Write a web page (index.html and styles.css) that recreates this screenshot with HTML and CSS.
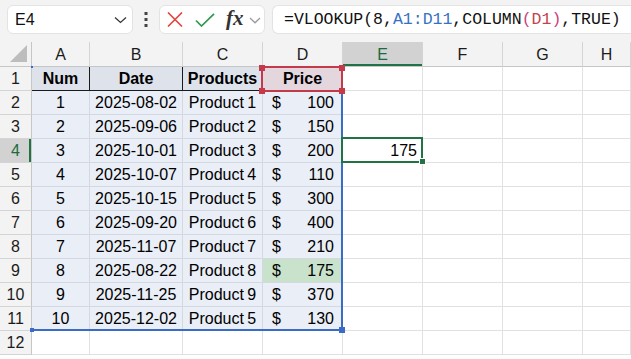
FILE: index.html
```html
<!DOCTYPE html>
<html>
<head>
<meta charset="utf-8">
<link rel="stylesheet" href="styles.css">
</head>
<body>
<div class="toolbar">
  <div class="namebox">
    <span class="nb-text">E4</span>
    <svg class="nb-chev" width="13" height="8" viewBox="0 0 13 8"><path d="M1 1.5 L6.5 6.5 L12 1.5" fill="none" stroke="#333" stroke-width="1.2"/></svg>
  </div>
  <div class="dots">
    <svg width="4" height="15" viewBox="0 0 4 15"><rect x="0.5" y="0" width="3" height="3" fill="#444"/><rect x="0.5" y="6" width="3" height="3" fill="#444"/><rect x="0.5" y="12" width="3" height="3" fill="#444"/></svg>
  </div>
  <div class="fxbox">
    <svg class="ic-x" width="16" height="15" viewBox="0 0 16 15"><path d="M1 0.5 L15 14.5 M15 0.5 L1 14.5" stroke="#e5423d" stroke-width="1.6" fill="none"/></svg>
    <svg class="ic-check" width="20" height="14" viewBox="0 0 20 14"><path d="M1 7.5 L6.5 13 L19 0.8" stroke="#2f9a4d" stroke-width="1.7" fill="none"/></svg>
    <span class="fx">fx</span>
    <svg class="ic-chev" width="12" height="7" viewBox="0 0 12 7"><path d="M1 1 L6 5.8 L11 1" fill="none" stroke="#9a9a9a" stroke-width="1.3"/></svg>
  </div>
  <div class="formula">=VLOOKUP(8,<span class="rb">A1:D11</span>,COLUMN<span class="rp">(</span><span class="rr">D1</span><span class="rp">)</span>,TRUE)</div>
</div>

<div class="sheet">
  <div class="grid">
    <div class="c corner"><svg width="18" height="18" viewBox="0 0 18 18"><polygon points="17,0 17,17 0,17" fill="#bdbdbd"/></svg></div>
    <div class="c colh">A</div>
    <div class="c colh">B</div>
    <div class="c colh">C</div>
    <div class="c colh">D</div>
    <div class="c colh sel">E</div>
    <div class="c colh">F</div>
    <div class="c colh">G</div>
    <div class="c colh">H</div>

    <div class="c rowh">1</div>
    <div class="c t th ctr">Num</div>
    <div class="c t th ctr">Date</div>
    <div class="c t th ctr">Products</div>
    <div class="c t th ctr pink">Price</div>
    <div class="c"></div><div class="c"></div><div class="c"></div><div class="c"></div>

    <div class="c rowh">2</div>
    <div class="c t ctr">1</div><div class="c t ctr">2025-08-02</div><div class="c t ctr prod">Product 1</div>
    <div class="c t money"><span>$</span><span>100</span></div>
    <div class="c"></div><div class="c"></div><div class="c"></div><div class="c"></div>

    <div class="c rowh">3</div>
    <div class="c t ctr">2</div><div class="c t ctr">2025-09-06</div><div class="c t ctr prod">Product 2</div>
    <div class="c t money"><span>$</span><span>150</span></div>
    <div class="c"></div><div class="c"></div><div class="c"></div><div class="c"></div>

    <div class="c rowh sel">4</div>
    <div class="c t ctr">3</div><div class="c t ctr">2025-10-01</div><div class="c t ctr prod">Product 3</div>
    <div class="c t money"><span>$</span><span>200</span></div>
    <div class="c right">175</div><div class="c"></div><div class="c"></div><div class="c"></div>

    <div class="c rowh">5</div>
    <div class="c t ctr">4</div><div class="c t ctr">2025-10-07</div><div class="c t ctr prod">Product 4</div>
    <div class="c t money"><span>$</span><span>110</span></div>
    <div class="c"></div><div class="c"></div><div class="c"></div><div class="c"></div>

    <div class="c rowh">6</div>
    <div class="c t ctr">5</div><div class="c t ctr">2025-10-15</div><div class="c t ctr prod">Product 5</div>
    <div class="c t money"><span>$</span><span>300</span></div>
    <div class="c"></div><div class="c"></div><div class="c"></div><div class="c"></div>

    <div class="c rowh">7</div>
    <div class="c t ctr">6</div><div class="c t ctr">2025-09-20</div><div class="c t ctr prod">Product 6</div>
    <div class="c t money"><span>$</span><span>400</span></div>
    <div class="c"></div><div class="c"></div><div class="c"></div><div class="c"></div>

    <div class="c rowh">8</div>
    <div class="c t ctr">7</div><div class="c t ctr">2025-11-07</div><div class="c t ctr prod">Product 7</div>
    <div class="c t money"><span>$</span><span>210</span></div>
    <div class="c"></div><div class="c"></div><div class="c"></div><div class="c"></div>

    <div class="c rowh">9</div>
    <div class="c t ctr">8</div><div class="c t ctr">2025-08-22</div><div class="c t ctr prod">Product 8</div>
    <div class="c t money hit"><span>$</span><span>175</span></div>
    <div class="c"></div><div class="c"></div><div class="c"></div><div class="c"></div>

    <div class="c rowh">10</div>
    <div class="c t ctr">9</div><div class="c t ctr">2025-11-25</div><div class="c t ctr prod">Product 9</div>
    <div class="c t money"><span>$</span><span>370</span></div>
    <div class="c"></div><div class="c"></div><div class="c"></div><div class="c"></div>

    <div class="c rowh">11</div>
    <div class="c t ctr">10</div><div class="c t ctr">2025-12-02</div><div class="c t ctr prod">Product 5</div>
    <div class="c t money"><span>$</span><span>130</span></div>
    <div class="c"></div><div class="c"></div><div class="c"></div><div class="c"></div>

    <div class="c rowh">12</div>
    <div class="c"></div><div class="c"></div><div class="c"></div><div class="c"></div>
    <div class="c"></div><div class="c"></div><div class="c"></div><div class="c"></div>
  </div>

  <div class="range-blue"></div>
  <div class="hdl blue-br"></div>
  <div class="hdl blue-bl"></div>
  <div class="hdl blue-tl"></div>
  <div class="range-red"></div>
  <div class="hdl red-tl"></div>
  <div class="hdl red-tr"></div>
  <div class="hdl red-bl"></div>
  <div class="hdl red-br"></div>
  <div class="active"></div>
  <div class="hdl act-h"></div>
</div>
</body>
</html>
```

FILE: styles.css
```css
html, body {
  margin: 0;
  padding: 0;
}
body {
  width: 631px;
  height: 359px;
  overflow: hidden;
  background: #ffffff;
  font-family: "Liberation Sans", Arial, sans-serif;
  color: #000;
}

/* ---------- toolbar ---------- */
.toolbar {
  height: 42px;
  background: #f3f3f3;
  display: flex;
  align-items: flex-start;
  padding-top: 5px;
  box-sizing: border-box;
}
.namebox {
  margin-left: 7px;
  width: 126px;
  height: 29px;
  background: #fff;
  border: 1px solid #e3e3e3;
  border-radius: 6px;
  box-sizing: border-box;
  display: flex;
  align-items: center;
  justify-content: space-between;
  padding: 0 5px 0 7px;
}
.nb-text {
  font-size: 16px;
  color: #111;
}
.dots {
  width: 26px;
  height: 29px;
  display: flex;
  align-items: center;
  justify-content: center;
}
.fxbox {
  width: 106px;
  height: 29px;
  background: #fff;
  border: 1px solid #e3e3e3;
  border-radius: 6px;
  box-sizing: border-box;
  display: flex;
  align-items: center;
  padding-left: 7px;
}
.ic-x { margin-right: 12px; }
.ic-check { margin-right: 11px; }
.fx {
  font-family: "Liberation Serif", "DejaVu Serif", serif;
  font-style: italic;
  font-weight: bold;
  font-size: 21px;
  color: #333;
  line-height: 1;
  margin-top: -3px;
  margin-right: 5px;
}
.ic-chev { margin-top: 2px; }
.formula {
  margin-left: 7px;
  flex: 1;
  height: 29px;
  background: #fff;
  border: 1px solid #e3e3e3;
  border-right: none;
  border-radius: 6px 0 0 6px;
  box-sizing: border-box;
  padding-left: 11px;
  display: flex;
  align-items: center;
  font-family: "Liberation Mono", "DejaVu Sans Mono", monospace;
  font-size: 16.5px;
  color: #111;
  white-space: pre;
}
.rb { color: #3671c6; }
.rr { color: #c2434d; }
.rp { color: #c8437f; }

/* ---------- sheet ---------- */
.sheet {
  position: relative;
  height: 317px;
  overflow: hidden;
}
.grid {
  display: grid;
  grid-template-columns: 32px 58px 93px 80px 80px 80px 80px 80px 48px;
  grid-template-rows: 25px;
  grid-auto-rows: 24px;
}
.c {
  box-sizing: border-box;
  border-right: 1px solid #e1e1e1;
  border-bottom: 1px solid #e1e1e1;
  display: flex;
  align-items: center;
  font-size: 16px;
  padding: 0 6px;
  white-space: nowrap;
  overflow: hidden;
}
.corner {
  background: #f3f3f3;
  border-right: 1px solid #c6c6c6;
  border-bottom: 1px solid #c6c6c6;
  padding: 3px 0 0 10px;
  align-items: flex-start;
}
.colh {
  background: #f3f3f3;
  justify-content: center;
  border-right: 1px solid #d4d4d4;
  border-bottom: 1px solid #c6c6c6;
  color: #1b1b1b;
  padding-top: 2px;
}
.colh.sel {
  background: #d2d2d2;
  color: #1d6a3d;
  box-shadow: inset 0 -2px 0 #217346;
}
.rowh {
  background: #f3f3f3;
  justify-content: center;
  border-right: 1px solid #c6c6c6;
  border-bottom: 1px solid #d4d4d4;
  color: #1b1b1b;
  padding: 0;
}
.rowh.sel {
  background: #d2d2d2;
  color: #1d6a3d;
  box-shadow: inset -2px 0 0 #217346;
}
.t {
  background: #e9eef7;
  border-right: 1px solid #d3d8e1;
  border-bottom: 1px solid #d3d8e1;
}
.th {
  background: #dde2eb;
  font-weight: bold;
  border-right: 1px solid #1a1a1a;
  border-bottom: 1px solid #1a1a1a;
}
.pink { background: #e4d6dd; }
.ctr { justify-content: center; padding: 0; }
.prod { word-spacing: -1px; }
.money {
  justify-content: space-between;
  padding: 0 8px 0 9px;
}
.hit { background: #c8e2cb; }
.right { justify-content: flex-end; padding-right: 5px; }

/* ---------- overlays ---------- */
.range-blue {
  position: absolute;
  left: 30px;
  top: 24px;
  width: 313px;
  height: 265px;
  box-sizing: border-box;
  border-right: 2px solid #3a6cc6;
  border-bottom: 2px solid #3a6cc6;
}
.range-red {
  position: absolute;
  left: 261px;
  top: 24px;
  width: 82px;
  height: 26px;
  box-sizing: border-box;
  border: 2px solid #c43a4a;
}
.active {
  position: absolute;
  left: 341px;
  top: 95px;
  width: 82px;
  height: 26px;
  box-sizing: border-box;
  border: 2px solid #217346;
}
.hdl {
  position: absolute;
  width: 6px;
  height: 6px;
  box-sizing: border-box;
}
.blue-br { left: 339px; top: 285px; background: #3a6cc6; }
.blue-bl { left: 30px; top: 286px; width: 4px; height: 4px; background: #3a6cc6; }
.blue-tl { left: 31px; top: 24px; width: 2px; height: 2px; background: #3a6cc6; }
.red-tl { left: 259px; top: 23px; background: #c43a4a; }
.red-tr { left: 339px; top: 23px; background: #c43a4a; }
.red-bl { left: 259px; top: 46px; background: #c43a4a; }
.red-br { left: 339px; top: 46px; background: #c43a4a; }
.act-h { left: 419px; top: 116px; width: 7px; height: 7px; background: #217346; border: 1px solid #fff; }
```
